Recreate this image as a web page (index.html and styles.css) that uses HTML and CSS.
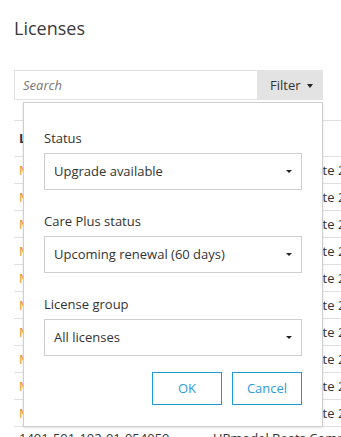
FILE: index.html
```html
<!DOCTYPE html>
<html>
<head>
<meta charset="utf-8">
<link rel="stylesheet" href="styles.css">
</head>
<body>
<div class="page">
  <h1 class="title">Licenses</h1>
  <div class="toolbar">
    <div class="search">Search</div>
    <div class="filter-btn">Filter <span class="caret"></span></div>
  </div>
  <div class="table">
    <div class="row head"><span class="c1">License key</span><span class="c2">Type</span></div>
    <div class="row"><span class="c1 link">M0A-F0A-12Q-01-054FQS</span><span class="c2">Update 2021</span></div>
    <div class="row"><span class="c1 link">M0A-F0A-12Q-01-054FQS</span><span class="c2">Update 2021</span></div>
    <div class="row"><span class="c1 link">M0A-F0A-12Q-01-054FQS</span><span class="c2">Update 2021</span></div>
    <div class="row"><span class="c1 link">M0A-F0A-12Q-01-054FQS</span><span class="c2">Update 2021</span></div>
    <div class="row"><span class="c1 link">M0A-F0A-12Q-01-054FQS</span><span class="c2">Update 2021</span></div>
    <div class="row"><span class="c1 link">M0A-F0A-12Q-01-054FQS</span><span class="c2">Update 2021</span></div>
    <div class="row"><span class="c1 link">M0A-F0A-12Q-01-054FQS</span><span class="c2">Update 2021</span></div>
    <div class="row"><span class="c1 link">M0A-F0A-12Q-01-054FQS</span><span class="c2">Update 2021</span></div>
    <div class="row"><span class="c1 link">M0A-F0A-12Q-01-054FQS</span><span class="c2">Update 2021</span></div>
    <div class="row"><span class="c1 link">M0A-F0A-12Q-01-054FQS</span><span class="c2">Update 2021</span></div>
    <div class="row last"><span class="c1">1401-501-102-01-054050</span><span class="c2">UPmodel Beats Complete 2021</span></div>
  </div>

  <div class="panel">
    <div class="field">
      <div class="label">Status</div>
      <div class="select">Upgrade available<span class="scaret"></span></div>
    </div>
    <div class="field">
      <div class="label">Care Plus status</div>
      <div class="select">Upcoming renewal (60 days)<span class="scaret"></span></div>
    </div>
    <div class="field">
      <div class="label">License group</div>
      <div class="select">All licenses<span class="scaret"></span></div>
    </div>
    <div class="actions">
      <div class="btn">OK</div>
      <div class="btn">Cancel</div>
    </div>
  </div>
</div>
</body>
</html>
```

FILE: styles.css
```css
html, body {
  margin: 0;
  padding: 0;
  background: #fff;
  overflow: hidden;
}
body {
  font-family: "Open Sans", "DejaVu Sans", sans-serif;
  font-size: 13px;
  color: #333;
}
.page {
  position: relative;
  padding: 16px 0 0 14px;
  width: 500px;
}
.title {
  margin: 0;
  font-size: 18px;
  line-height: 24px;
  font-weight: 400;
  color: #3a3a3a;
}
.toolbar {
  display: flex;
  width: 309px;
  height: 30px;
  margin-top: 30px;
}
.search {
  box-sizing: border-box;
  width: 244px;
  height: 30px;
  border: 1px solid #e2e2e2;
  padding-left: 8px;
  line-height: 28px;
  font-style: italic;
  color: #777;
}
.filter-btn {
  box-sizing: border-box;
  width: 65px;
  height: 30px;
  background: #e3e3e3;
  padding-left: 12px;
  line-height: 30px;
  color: #333;
  display: flex;
  align-items: center;
  gap: 6px;
}
.caret {
  width: 0;
  height: 0;
  border-left: 3.5px solid transparent;
  border-right: 3.5px solid transparent;
  border-top: 4px solid #222;
  margin-top: 1px;
}
.table {
  margin-top: 20px;
  border-top: 1px solid #e0e0e0;
}
.row {
  display: grid;
  grid-template-columns: 271px auto;
  padding-left: 5px;
  height: 26px;
  line-height: 26px;
  border-bottom: 1px solid #e0e0e0;
  white-space: nowrap;
}
.row.head {
  height: 35px;
  line-height: 35px;
  font-weight: 700;
}
.row.last {
  border-bottom: none;
  line-height: 22px;
  grid-template-columns: 194px auto;
}
.link {
  color: #e8932a;
}
.panel {
  position: absolute;
  top: 102px;
  left: 23px;
  box-sizing: border-box;
  width: 300px;
  background: #fff;
  border: 1px solid #cfcfcf;
  box-shadow: 0 1px 2px rgba(0,0,0,0.12);
  padding: 26px 20px 21px 20px;
}
.field {
  margin-bottom: 22px;
}
.field:nth-child(3) {
  margin-bottom: 16px;
}
.label {
  line-height: 18px;
  margin-bottom: 6px;
  color: #333;
}
.select {
  box-sizing: border-box;
  height: 37px;
  border: 1px solid #cfcfcf;
  padding-left: 9px;
  line-height: 35px;
  display: flex;
  align-items: center;
  justify-content: space-between;
  padding-right: 9px;
  color: #333;
}
.scaret {
  width: 0;
  height: 0;
  border-left: 3px solid transparent;
  border-right: 3px solid transparent;
  border-top: 3px solid #222;
}
.actions {
  display: flex;
  justify-content: flex-end;
  gap: 10px;
}
.btn {
  box-sizing: border-box;
  width: 70px;
  height: 33px;
  border: 1px solid #1b9ad6;
  color: #2f9ad8;
  text-align: center;
  line-height: 31px;
}
```
